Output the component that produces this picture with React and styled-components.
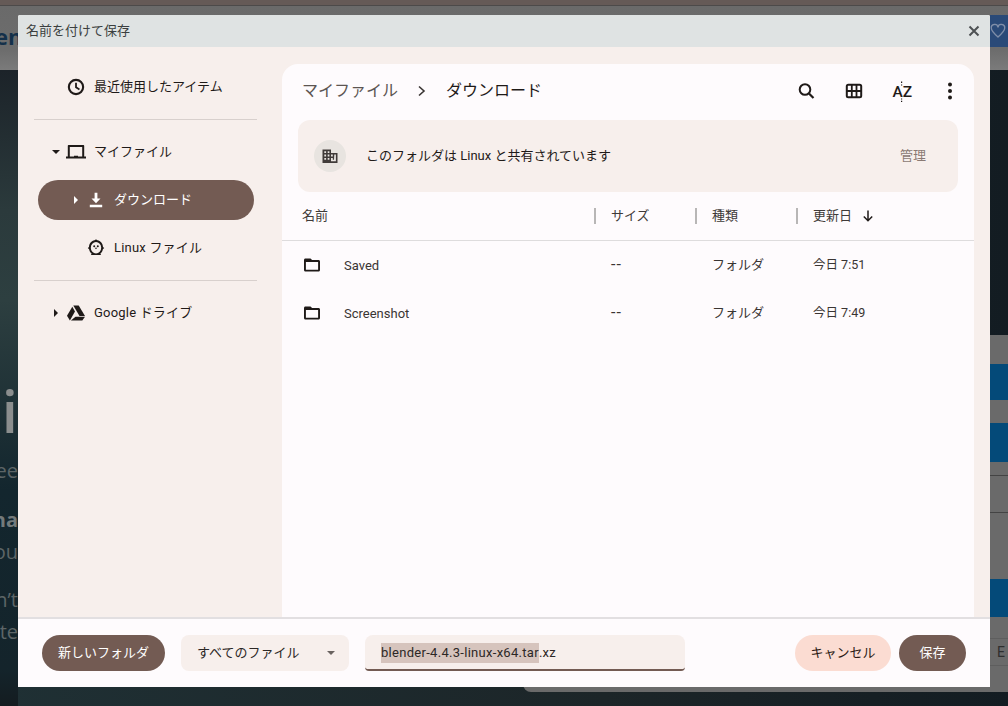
import React from "react";
import styled, { createGlobalStyle } from "styled-components";

const Global = createGlobalStyle`
  html, body { margin: 0; padding: 0; background: #101a20; }
  * { box-sizing: border-box; }
  body { font-family: Roboto, "Noto Sans CJK JP", sans-serif; }
`;

const Page = styled.div`
  position: relative;
  width: 1008px;
  height: 706px;
  overflow: hidden;
  display: flex;
  flex-direction: column;
  background: #101a20;
`;
const TopStrip = styled.div`
  height: 6px;
  background: #655a57;
  border-bottom: 1px solid #4c4a4a;
`;
const HeaderBand = styled.div`
  height: 64px;
  background: linear-gradient(#6a6a6a, #6d6d6d 70%, #7b7b7b);
  display: flex;
  align-items: center;
  justify-content: space-between;
`;
const BrandFragment = styled.span`
  font: 700 22px/1 "Open Sans", sans-serif;
  color: #14304a;
  margin-left: -5px;
  margin-top: -4px;
`;
const HeartBox = styled.div`
  width: 18px;
  height: 32px;
  margin-top: -14px;
  background: #2a4a78;
  display: flex;
  align-items: center;
  color: #7f8ea8;
`;
const Hero = styled.div`
  position: relative;
  flex: 1;
  background: linear-gradient(90deg, #1f3034 0, #1c2528 60%, #131c22 100%);
`;
const HeroLeft = styled.div`
  position: absolute;
  left: 0;
  top: 0;
  width: 18px;
  height: 636px;
  overflow: hidden;
  background: linear-gradient(#1c2329 0, #2b3a3c 140px, #2d3f40 230px, #13262e 420px, #14242b 600px, #141c20 100%);
`;
const HeroLine = styled.div`
  position: absolute;
  right: 0;
  top: ${(p) => p.$y}px;
  white-space: nowrap;
  color: ${(p) => p.$color || "#5a6468"};
  font: ${(p) => p.$weight || 400} ${(p) => p.$size || 20}px/1 "Open Sans", sans-serif;
`;
const BackPanel = styled.div`
  position: absolute;
  left: 523px;
  top: 265px;
  right: 0;
  height: 357px;
  background: #6a6a6a;
  border-bottom-left-radius: 8px;
  display: flex;
  flex-direction: column;
  padding-top: 29px;
`;
const BlueBar = styled.div`
  height: ${(p) => p.$h}px;
  margin-bottom: ${(p) => p.$gap}px;
  background: #044a79;
`;
const BackRule = styled.div`
  height: ${(p) => p.$h}px;
  margin-bottom: ${(p) => p.$gap}px;
  border-top: 1px solid #444;
  border-bottom: 1px solid #444;
`;
const BackFooter = styled.div`
  height: 28px;
  border-top: 1px solid #5e5e5e;
  border-bottom: 1px solid #5e5e5e;
  text-align: right;
  color: #2e2e2e;
  font: 14px/26px Roboto, sans-serif;
`;
const FooterGlyph = styled.span`
  display: inline-block;
  width: 11px;
  text-align: left;
`;

const Dialog = styled.div`
  position: absolute;
  left: 18px;
  top: 15px;
  width: 972px;
  height: 672px;
  display: flex;
  flex-direction: column;
  background: #f7efec;
  border-radius: 2px 2px 0 0;
  color: #1f1a18;
  font: 400 13px/20px Roboto, "Noto Sans CJK JP", sans-serif;
`;
const TitleBar = styled.div`
  height: 32px;
  flex: none;
  background: #dfe3e3;
  display: flex;
  align-items: center;
  justify-content: space-between;
  padding: 0 10px 0 8px;
  color: #3b3f40;
  border-radius: 2px 2px 0 0;
`;
const CloseIcon = styled.svg`
  width: 12px;
  height: 12px;
  margin-top: -1px;
`;
const Body = styled.div`
  flex: 1;
  display: flex;
  min-height: 0;
`;
const Sidebar = styled.nav`
  width: 264px;
  flex: none;
  padding-top: 20px;
  display: flex;
  flex-direction: column;
`;
const NavRow = styled.div`
  height: 40px;
  width: 216px;
  margin-left: 20px;
  margin-bottom: ${(p) => p.$gap || 0}px;
  padding-left: ${(p) => (p.$depth ? 32 : 12)}px;
  display: grid;
  grid-template-columns: 12px 20px 1fr;
  column-gap: 4px;
  align-items: center;
  border-radius: 20px;
  background: ${(p) => (p.$active ? "#735b53" : "transparent")};
  color: ${(p) => (p.$active ? "#fff" : "#1f1a18")};
`;
const NavLabel = styled.span`
  margin-left: 4px;
  white-space: nowrap;
  letter-spacing: ${(p) => (p.$latin ? "0.2px" : "0")};
`;
const Divider = styled.div`
  height: 1px;
  width: 223px;
  margin: 12px 0 12px 16px;
  background: #d8d0cd;
`;
const Arrow = styled.span`
  justify-self: center;
  width: 0;
  height: 0;
  ${(p) =>
    p.$open
      ? `border-left: 4px solid transparent; border-right: 4px solid transparent; border-top: 4px solid currentColor;`
      : `border-top: 4px solid transparent; border-bottom: 4px solid transparent; border-left: 4px solid currentColor;`}
`;
const Icon = styled.svg`
  width: ${(p) => p.$s || 20}px;
  height: ${(p) => p.$s || 20}px;
  fill: currentColor;
  display: block;
`;
const Main = styled.section`
  flex: 1;
  margin: 17px 16px 0 0;
  background: #fefbfd;
  border-radius: 16px 16px 0 0;
  display: flex;
  flex-direction: column;
  min-width: 0;
`;
const TopRow = styled.div`
  height: 56px;
  flex: none;
  display: flex;
  align-items: center;
  justify-content: space-between;
  padding: 0 12px 3px 20px;
`;
const Crumbs = styled.div`
  display: flex;
  align-items: center;
  font-size: 16px;
  line-height: 24px;
`;
const CrumbParent = styled.span`
  color: #5c5552;
`;
const CrumbSep = styled.svg`
  width: 10px;
  height: 12px;
  margin: 1px 19px 0 19px;
`;
const Tools = styled.div`
  display: flex;
  align-items: center;
  gap: 24px;
`;
const ToolIcon = styled.svg`
  width: 24px;
  height: 24px;
  display: block;
`;
const Banner = styled.div`
  height: 72px;
  flex: none;
  margin: 0 16px;
  padding: 0 32px 0 16px;
  background: #f7efec;
  border-radius: 12px;
  display: flex;
  align-items: center;
`;
const BannerBadge = styled.div`
  width: 32px;
  height: 32px;
  border-radius: 50%;
  background: #e8e4e0;
  display: flex;
  align-items: center;
  justify-content: center;
  margin-right: 20px;
`;
const BannerText = styled.span`
  flex: 1;
`;
const BannerAction = styled.span`
  color: #8a7a74;
`;
const Grid = styled.div`
  display: grid;
  grid-template-columns: 292px 101px 101px 1fr;
  align-items: center;
  padding-left: 20px;
  height: ${(p) => p.$h}px;
  flex: none;
`;
const HeadRow = styled(Grid)`
  border-bottom: 1px solid #dedcdd;
`;
const HeadCell = styled.div`
  height: 16px;
  display: flex;
  align-items: center;
  gap: 9px;
  color: #3f3a38;
  padding-left: ${(p) => (p.$first ? 0 : 15)}px;
  border-left: ${(p) => (p.$first ? "none" : "2px solid #b8b6b6")};
`;
const NameCell = styled.div`
  display: flex;
  align-items: center;
  gap: 22px;
  color: #3a3533;
`;
const NameText = styled.span`
  margin-top: 2px;
`;
const Cell = styled.div`
  padding-left: 17px;
  color: #3a3533;
  font-size: ${(p) => p.$size || 13}px;
  letter-spacing: ${(p) => p.$track || 0}px;
`;
const Footer = styled.footer`
  height: 70px;
  flex: none;
  background: #fefbfd;
  border-top: 2px solid #e2dfe1;
  display: flex;
  align-items: center;
  padding: 0 24px;
`;
const Pill = styled.button`
  height: 36px;
  width: ${(p) => p.$w}px;
  margin-left: ${(p) => p.$ml || 0}px;
  border: 0;
  padding: 0;
  border-radius: 18px;
  background: ${(p) => (p.$tone ? "#fbdcd2" : "#735b53")};
  color: ${(p) => (p.$tone ? "#2c1a14" : "#fff")};
  font: inherit;
`;
const SelectBox = styled.div`
  width: 168px;
  height: 36px;
  margin-left: 16px;
  padding: 0 14px 0 16px;
  border-radius: 8px;
  background: #f7efec;
  display: flex;
  align-items: center;
  justify-content: space-between;
  color: #2c2826;
`;
const SelectCaret = styled.span`
  width: 0;
  height: 0;
  border-left: 4.5px solid transparent;
  border-right: 4.5px solid transparent;
  border-top: 4.5px solid #6a6360;
`;
const NameField = styled.div`
  width: 320px;
  height: 36px;
  margin: 0 auto 0 16px;
  padding: 1px 16px 0;
  border-radius: 8px 8px 4px 4px;
  background: #f7efec;
  border-bottom: 2px solid #735b53;
  display: flex;
  align-items: center;
  white-space: nowrap;
  color: #2c2826;
  letter-spacing: 0.29px;
`;
const Selected = styled.span`
  background: #d6c4bd;
`;

const rows = [
  { name: "Saved", date: "今日 7:51" },
  { name: "Screenshot", date: "今日 7:49" },
];

const FolderIcon = () => (
  <Icon $s={20} viewBox="0 0 20 20">
    <path
      fillRule="evenodd"
      d="M3.500 3.400h5l1.600 1.600h6.400c.9 0 1.500.7 1.500 1.500v8.600c0 .8-.6 1.500-1.500 1.500h-13c-.9 0-1.500-.7-1.500-1.500V4.900c0-.8.6-1.500 1.500-1.500zm.4 3.700v7.600h12.200V7.100z"
      fill="#1f1a18"
    />
  </Icon>
);

export default function App() {
  return (
    <Page>
      <Global />
      <TopStrip />
      <HeaderBand>
        <BrandFragment>en</BrandFragment>
        <HeartBox>
          <svg width="16" height="16" viewBox="0 0 24 24" fill="none" stroke="currentColor" strokeWidth="2">
            <path d="M12 21C5 15 2 12 2 8a5 5 0 0 1 10-1.500A5 5 0 0 1 22 8c0 4-3 7-10 13z" />
          </svg>
        </HeartBox>
      </HeaderBand>
      <Hero>
        <HeroLeft>
          <HeroLine $y={312} $size={58} $color="#8b8e8e" $weight={600}>pi</HeroLine>
          <HeroLine $y={391} $size={20} $color="#5d6567">ee</HeroLine>
          <HeroLine $y={440} $size={20} $color="#737a7b" $weight={700}>na</HeroLine>
          <HeroLine $y={472} $size={20} $color="#5d6567">ou</HeroLine>
          <HeroLine $y={520} $size={20} $color="#5d6567">n’t</HeroLine>
          <HeroLine $y={552} $size={20} $color="#5d6567">ete</HeroLine>
        </HeroLeft>
        <BackPanel>
          <BlueBar $h={36} $gap={23} />
          <BlueBar $h={39} $gap={13} />
          <BackRule $h={38} $gap={66} />
          <BlueBar $h={38} $gap={21} />
          <BackFooter><FooterGlyph>E</FooterGlyph></BackFooter>
        </BackPanel>
      </Hero>

      <Dialog>
        <TitleBar>
          <span>名前を付けて保存</span>
          <CloseIcon viewBox="0 0 12 12">
            <path d="M1.500 1.500l9 9M10.500 1.500l-9 9" stroke="#4d5153" strokeWidth="2" />
          </CloseIcon>
        </TitleBar>
        <Body>
          <Sidebar>
            <NavRow>
              <span />
              <Icon viewBox="0 0 20 20">
                <path fillRule="evenodd" d="M10 1.800a8.200 8.200 0 1 0 0 16.400 8.200 8.200 0 0 0 0-16.400zm0 2.100a6.100 6.100 0 1 1 0 12.200 6.100 6.100 0 0 1 0-12.200z" />
                <path d="M9.100 5.800h1.800v4l3 1.900-.9 1.500-3.900-2.400z" />
              </Icon>
              <NavLabel>最近使用したアイテム</NavLabel>
            </NavRow>
            <Divider />
            <NavRow $gap={8}>
              <Arrow $open />
              <Icon viewBox="0 0 20 20">
                <path fillRule="evenodd" d="M2.800 3h14.400c.6 0 1 .4 1 1v10.500h1.800v1.900H0v-1.900h1.800V4c0-.6.4-1 1-1zm1 2v9.500H8v-.7h4v.7h4.200V5z" />
              </Icon>
              <NavLabel>マイファイル</NavLabel>
            </NavRow>
            <NavRow $depth $active $gap={8}>
              <Arrow />
              <Icon viewBox="0 0 20 20">
                <path d="M8.600 2.800h2.800v5.700h3.100L10 13.200 5.500 8.500h3.100zM3.800 14.700h12.400v2.500H3.800z" />
              </Icon>
              <NavLabel>ダウンロード</NavLabel>
            </NavRow>
            <NavRow $depth>
              <span />
              <Icon viewBox="0 0 20 20">
                <path d="M10 1.500c.6 0 1.100.3 1.400.8C14.600 3 16.900 5.600 17 8.900l1.200 1.100-1.300 1.200c-.3 1.800-1.200 3.300-2.500 4.300l.6 1.500H5l.6-1.500c-1.300-1-2.200-2.500-2.500-4.300L1.800 10 3 8.900c.1-3.300 2.400-5.900 5.600-6.600.3-.5.800-.8 1.400-.8z" />
                <ellipse cx="10" cy="9.800" rx="5.200" ry="5.700" fill="#f7efec" />
                <circle cx="8.200" cy="8.200" r="1" />
                <circle cx="11.800" cy="8.200" r="1" />
                <path d="M8.700 9.800h2.600L10 11.300z" />
              </Icon>
              <NavLabel $latin>Linux ファイル</NavLabel>
            </NavRow>
            <Divider />
            <NavRow>
              <Arrow />
              <Icon viewBox="0 0 20 20">
                <path d="M7.300 2.500h5.400l6.300 10.400h-5.500z" />
                <path d="M6.300 3.700l2.700 4.700L3.900 17.500 1 12.700z" />
                <path d="M9.500 13.700h9.500l-2.700 3.800H4.900z" />
              </Icon>
              <NavLabel $latin>Google ドライブ</NavLabel>
            </NavRow>
          </Sidebar>
          <Main>
            <TopRow>
              <Crumbs>
                <CrumbParent>マイファイル</CrumbParent>
                <CrumbSep viewBox="0 0 10 12">
                  <path d="M2 1.500L7 6l-5 4.500" fill="none" stroke="#3a3533" strokeWidth="1.600" />
                </CrumbSep>
                <span>ダウンロード</span>
              </Crumbs>
              <Tools>
                <ToolIcon viewBox="0 0 24 24">
                  <circle cx="11" cy="10.500" r="5.300" fill="none" stroke="#1f1a18" strokeWidth="2" />
                  <path d="M15 14.500l4.500 4.500" stroke="#1f1a18" strokeWidth="2.200" />
                </ToolIcon>
                <ToolIcon viewBox="0 0 24 24">
                  <rect x="4.800" y="5.800" width="14.400" height="12.400" rx="1.500" fill="none" stroke="#1f1a18" strokeWidth="2" />
                  <path d="M4.800 12h14.400M9.800 5.800v12.400M14.500 5.800v12.400" stroke="#1f1a18" strokeWidth="1.800" />
                </ToolIcon>
                <ToolIcon viewBox="0 0 24 24">
                  <text x="2.500" y="17.500" fontFamily="Roboto, sans-serif" fontWeight="500" fontSize="15.500" fill="#1f1a18">AZ</text>
                  <path d="M11 2.500h1.200v1.500H11zM11 5.500h1.200V6.500H11zM11 19.500h1.200v1H11zM11 21.800h1.200v1.200H11z" fill="#1f1a18" />
                </ToolIcon>
                <ToolIcon viewBox="0 0 24 24">
                  <circle cx="12" cy="5.500" r="2" fill="#1f1a18" />
                  <circle cx="12" cy="12" r="2" fill="#1f1a18" />
                  <circle cx="12" cy="18.500" r="2" fill="#1f1a18" />
                </ToolIcon>
              </Tools>
            </TopRow>
            <Banner>
              <BannerBadge>
                <Icon $s={18} viewBox="0 0 18 18">
                  <path fillRule="evenodd" d="M1.500 2.500h8.500v3.500h6.500v10H1.500zM3.300 4.200v1.800h1.800V4.200zm3.400 0v1.800h1.700V4.200zM3.300 7.600v1.800h1.800V7.600zm3.400 0v1.800h1.700V7.600zm3.300 0v1.800h1.800V7.600zM3.300 11v1.800h1.800V11zm3.400 0v1.800h1.700V11zm3.300 0v1.800h1.800V11zm3.300-3.400h1.600v6.700H10v-1.500h3z" fill="#403b39" />
                </Icon>
              </BannerBadge>
              <BannerText>このフォルダは Linux と共有されています</BannerText>
              <BannerAction>管理</BannerAction>
            </Banner>
            <HeadRow $h={49}>
              <HeadCell $first>名前</HeadCell>
              <HeadCell>サイズ</HeadCell>
              <HeadCell>種類</HeadCell>
              <HeadCell>
                更新日
                <svg width="14" height="14" viewBox="0 0 14 14">
                  <path d="M7 1.500v10M2.800 7.500L7 11.700l4.200-4.200" fill="none" stroke="#1f1a18" strokeWidth="1.500" />
                </svg>
              </HeadCell>
            </HeadRow>
            {rows.map((r) => (
              <Grid $h={48} key={r.name}>
                <NameCell>
                  <FolderIcon />
                  <NameText>{r.name}</NameText>
                </NameCell>
                <Cell $track={1} $size={16}>--</Cell>
                <Cell>フォルダ</Cell>
                <Cell $size={12.5}>{r.date}</Cell>
              </Grid>
            ))}
          </Main>
        </Body>
        <Footer>
          <Pill $w={123}>新しいフォルダ</Pill>
          <SelectBox>
            すべてのファイル
            <SelectCaret />
          </SelectBox>
          <NameField>
            <Selected>blender-4.4.3-linux-x64.tar</Selected>.xz
          </NameField>
          <Pill $w={96} $tone>キャンセル</Pill>
          <Pill $w={67} $ml={8}>保存</Pill>
        </Footer>
      </Dialog>
    </Page>
  );
}
